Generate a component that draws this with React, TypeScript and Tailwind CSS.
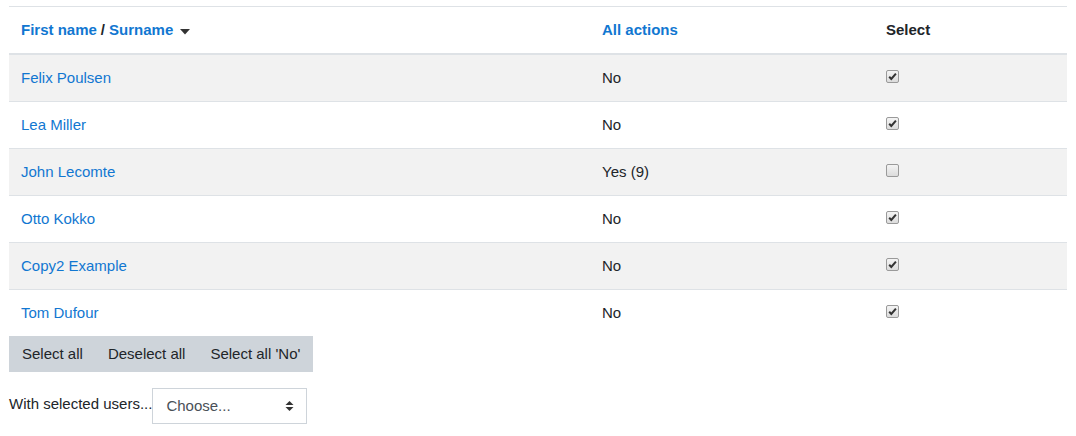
import React from "react";

const rows = [
  { name: "Felix Poulsen", actions: "No", checked: true },
  { name: "Lea Miller", actions: "No", checked: true },
  { name: "John Lecomte", actions: "Yes (9)", checked: false },
  { name: "Otto Kokko", actions: "No", checked: true },
  { name: "Copy2 Example", actions: "No", checked: true },
  { name: "Tom Dufour", actions: "No", checked: true },
];

function Check({ checked }: { checked: boolean }) {
  return (
    <span className="inline-flex w-[13px] h-[13px] rounded-[2px] border border-[#9a9a9a] bg-gradient-to-b from-[#f4f4f4] to-[#dcdcdc] items-center justify-center">
      {checked && (
        <svg width="11" height="11" viewBox="0 0 11 11">
          <path d="M2.2 5.8 L4.3 8 L8.9 2.6" fill="none" stroke="#333" strokeWidth="2" />
        </svg>
      )}
    </span>
  );
}

export default function App() {
  return (
    <div className="bg-white w-[1076px] h-[436px] px-[9px] pt-[6px] text-[15px] leading-[22.5px] text-[#212529] font-['Liberation_Sans',Arial,sans-serif]">
      <div className="border-t border-[#dee2e6]">
        <div className="flex h-[48px] items-center border-b-2 border-[#dee2e6] font-bold">
          <div className="w-[581px] px-[12px] flex items-center">
            <span className="text-[#1177d1]">First name</span>
            <span className="mx-[4px]">/</span>
            <span className="text-[#1177d1]">Surname</span>
            <svg className="ml-[7px] mt-[3px]" width="10" height="6" viewBox="0 0 10 6">
              <path d="M0 0 H10 L5 5.5 Z" fill="#333" />
            </svg>
          </div>
          <div className="w-[284px] px-[12px] text-[#1177d1]">All actions</div>
          <div className="flex-1 px-[12px]">Select</div>
        </div>
        {rows.map((r, i) => (
          <div
            key={r.name}
            className={`flex items-center ${i === 0 ? "h-[46px]" : "h-[47px] border-t border-[#dee2e6]"} ${i % 2 === 0 ? "bg-[#f2f2f2]" : "bg-white"}`}
          >
            <div className="w-[581px] px-[12px] text-[#1177d1]">{r.name}</div>
            <div className="w-[284px] px-[12px]">{r.actions}</div>
            <div className="flex-1 px-[12px] flex items-center -mt-[4px]">
              <Check checked={r.checked} />
            </div>
          </div>
        ))}
      </div>
      <div className="flex">
        <div className="flex bg-[#ced4da]">
          <button className="px-[13px] h-[36px] text-[#212529]">Select all</button>
          <button className="px-[12px] h-[36px] text-[#212529]">Deselect all</button>
          <button className="px-[13px] h-[36px] text-[#212529]">Select all 'No'</button>
        </div>
      </div>
      <div className="flex items-center mt-[16px]">
        <span className="-mt-[3px]">With selected users...</span>
        <div className="w-[155px] h-[36px] border border-[#ced4da] flex items-center justify-between pl-[13px] pr-[12px] text-[#495057]">
          <span>Choose...</span>
          <svg width="9" height="12" viewBox="0 0 9 12">
            <path d="M0.5 5 L4.5 1 L8.5 5 Z" fill="#333" />
            <path d="M0.5 7 L4.5 11 L8.5 7 Z" fill="#333" />
          </svg>
        </div>
      </div>
    </div>
  );
}
